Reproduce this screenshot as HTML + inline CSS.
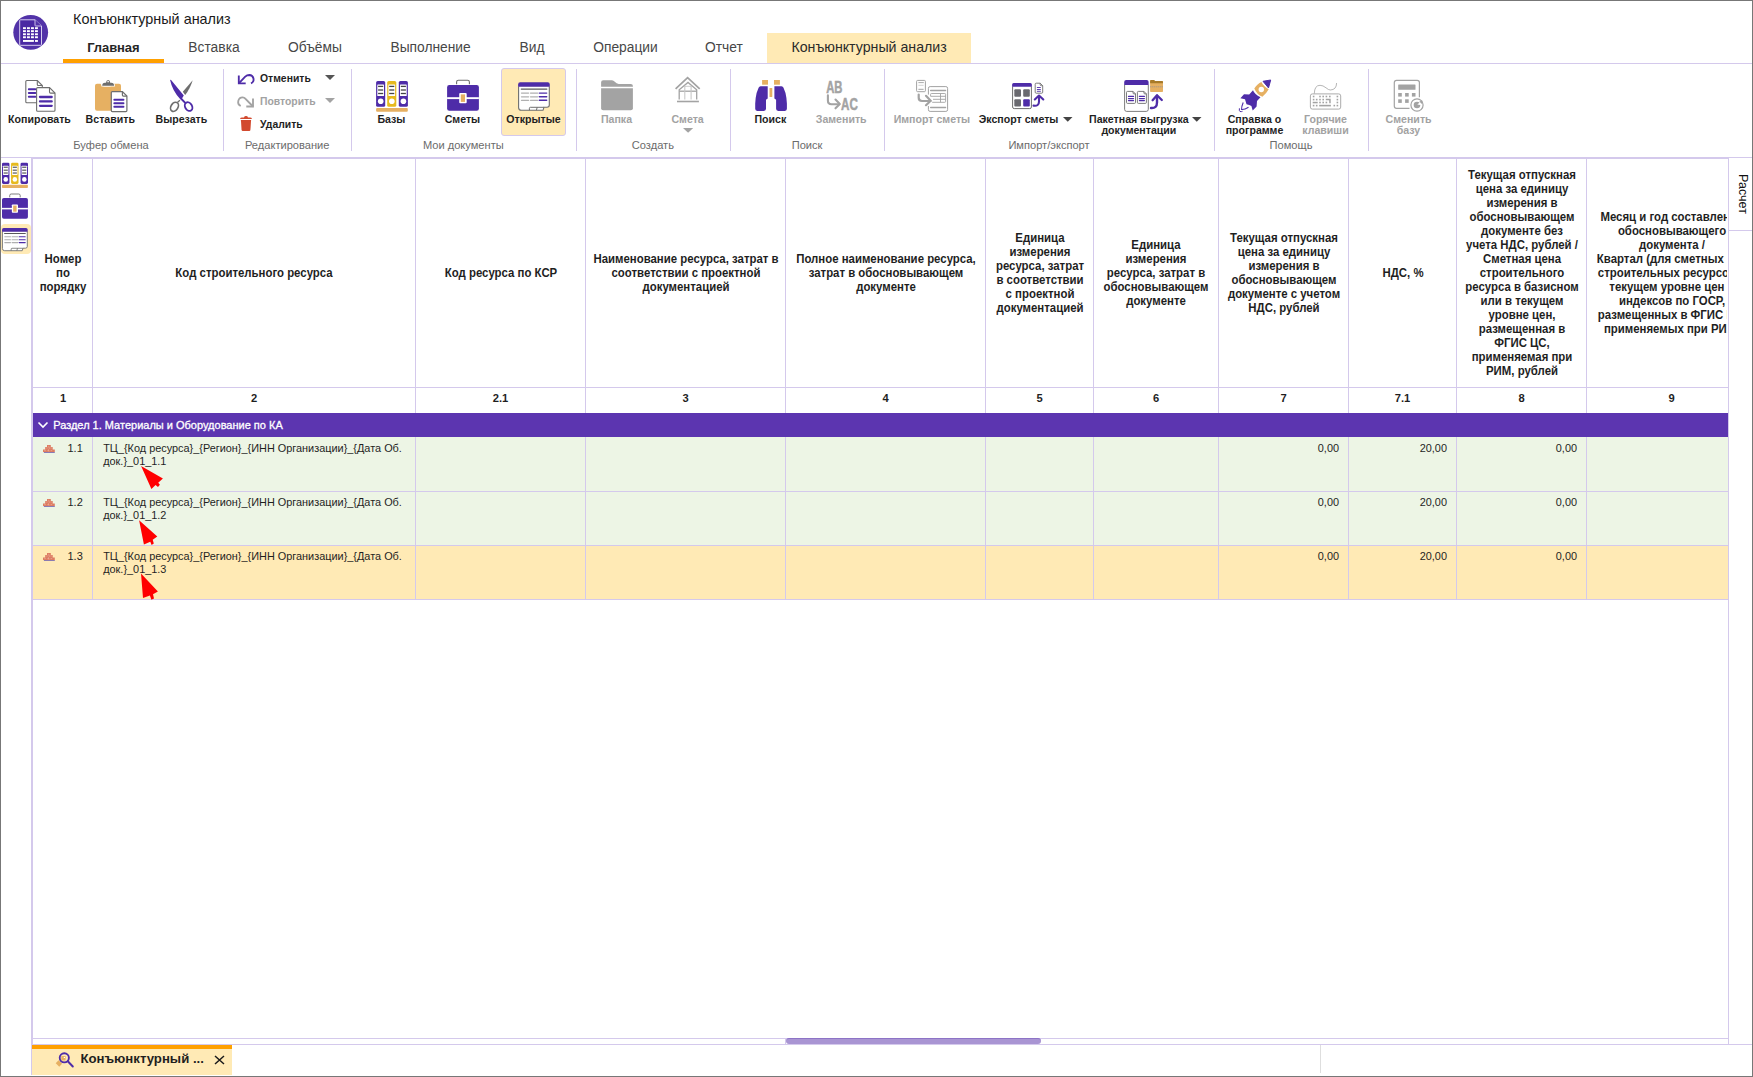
<!DOCTYPE html>
<html><head><meta charset="utf-8"><title>Конъюнктурный анализ</title>
<style>
html,body{margin:0;padding:0;}
body{width:1753px;height:1077px;position:relative;overflow:hidden;background:#fff;font-family:"Liberation Sans", sans-serif;}
.a{position:absolute;}
.t{white-space:nowrap;}
svg.a{overflow:visible;}
</style></head><body>
<div class="a t" style="left:73.00px;top:10.01px;font-size:14.4px;line-height:18.0px;font-weight:400;color:#1a1a1a;text-align:left;">Конъюнктурный анализ</div>
<div class="a" style="left:767px;top:33px;width:204px;height:30px;background:#FFEAB5;"></div>
<div class="a t" style="left:-6.70px;top:39.67px;width:240px;font-size:13px;line-height:16.25px;font-weight:700;color:#262626;text-align:center;letter-spacing:-0.1px;">Главная</div>
<div class="a t" style="left:94.00px;top:38.89px;width:240px;font-size:13.8px;line-height:17.25px;font-weight:400;color:#474747;text-align:center;">Вставка</div>
<div class="a t" style="left:195.00px;top:38.89px;width:240px;font-size:13.8px;line-height:17.25px;font-weight:400;color:#474747;text-align:center;">Объёмы</div>
<div class="a t" style="left:310.60px;top:38.89px;width:240px;font-size:13.8px;line-height:17.25px;font-weight:400;color:#474747;text-align:center;">Выполнение</div>
<div class="a t" style="left:412.10px;top:38.89px;width:240px;font-size:13.8px;line-height:17.25px;font-weight:400;color:#474747;text-align:center;">Вид</div>
<div class="a t" style="left:505.50px;top:38.89px;width:240px;font-size:13.8px;line-height:17.25px;font-weight:400;color:#474747;text-align:center;">Операции</div>
<div class="a t" style="left:603.90px;top:38.89px;width:240px;font-size:13.8px;line-height:17.25px;font-weight:400;color:#474747;text-align:center;">Отчет</div>
<div class="a t" style="left:749.10px;top:38.50px;width:240px;font-size:14.2px;line-height:17.75px;font-weight:400;color:#2a2a2a;text-align:center;">Конъюнктурный анализ</div>
<div class="a" style="left:63px;top:59px;width:101px;height:4px;background:#FFA000;"></div>
<div class="a" style="left:1px;top:63px;width:1751px;height:1px;background:#D4C9EC;"></div>
<div class="a" style="left:1px;top:157px;width:1751px;height:1px;background:#D4C9EC;"></div>
<div class="a" style="left:223px;top:69px;width:1px;height:82px;background:#D4C9EC;"></div>
<div class="a" style="left:351px;top:69px;width:1px;height:82px;background:#D4C9EC;"></div>
<div class="a" style="left:576px;top:69px;width:1px;height:82px;background:#D4C9EC;"></div>
<div class="a" style="left:730px;top:69px;width:1px;height:82px;background:#D4C9EC;"></div>
<div class="a" style="left:884px;top:69px;width:1px;height:82px;background:#D4C9EC;"></div>
<div class="a" style="left:1214px;top:69px;width:1px;height:82px;background:#D4C9EC;"></div>
<div class="a" style="left:1368px;top:69px;width:1px;height:82px;background:#D4C9EC;"></div>
<div class="a" style="left:501px;top:68px;width:65px;height:68px;background:#FFEAB5;box-sizing:border-box;border:1px solid #D4C9EC;border-radius:3px;"></div>
<div class="a t" style="left:-40.50px;top:112.50px;width:160px;font-size:10.6px;line-height:13.25px;font-weight:700;color:#1f1f1f;text-align:center;">Копировать</div>
<div class="a t" style="left:30.30px;top:112.50px;width:160px;font-size:10.6px;line-height:13.25px;font-weight:700;color:#1f1f1f;text-align:center;">Вставить</div>
<div class="a t" style="left:101.40px;top:112.50px;width:160px;font-size:10.6px;line-height:13.25px;font-weight:700;color:#1f1f1f;text-align:center;">Вырезать</div>
<div class="a t" style="left:311.40px;top:112.50px;width:160px;font-size:10.6px;line-height:13.25px;font-weight:700;color:#1f1f1f;text-align:center;">Базы</div>
<div class="a t" style="left:382.40px;top:112.50px;width:160px;font-size:10.6px;line-height:13.25px;font-weight:700;color:#1f1f1f;text-align:center;">Сметы</div>
<div class="a t" style="left:453.50px;top:112.50px;width:160px;font-size:10.6px;line-height:13.25px;font-weight:700;color:#1f1f1f;text-align:center;">Открытые</div>
<div class="a t" style="left:536.50px;top:112.50px;width:160px;font-size:10.6px;line-height:13.25px;font-weight:700;color:#a2a2a2;text-align:center;">Папка</div>
<div class="a t" style="left:607.60px;top:112.50px;width:160px;font-size:10.6px;line-height:13.25px;font-weight:700;color:#a2a2a2;text-align:center;">Смета</div>
<div class="a t" style="left:690.40px;top:112.50px;width:160px;font-size:10.6px;line-height:13.25px;font-weight:700;color:#1f1f1f;text-align:center;">Поиск</div>
<div class="a t" style="left:761.20px;top:112.50px;width:160px;font-size:10.6px;line-height:13.25px;font-weight:700;color:#a2a2a2;text-align:center;">Заменить</div>
<div class="a t" style="left:851.90px;top:112.50px;width:160px;font-size:10.6px;line-height:13.25px;font-weight:700;color:#a2a2a2;text-align:center;">Импорт сметы</div>
<div class="a t" style="left:938.60px;top:112.50px;width:160px;font-size:10.6px;line-height:13.25px;font-weight:700;color:#1f1f1f;text-align:center;">Экспорт сметы</div>
<div class="a t" style="left:1058.90px;top:112.50px;width:160px;font-size:10.6px;line-height:13.25px;font-weight:700;color:#1f1f1f;text-align:center;">Пакетная выгрузка</div>
<div class="a t" style="left:1058.90px;top:124.20px;width:160px;font-size:10.6px;line-height:13.25px;font-weight:700;color:#1f1f1f;text-align:center;">документации</div>
<div class="a t" style="left:1174.50px;top:112.50px;width:160px;font-size:10.6px;line-height:13.25px;font-weight:700;color:#1f1f1f;text-align:center;">Справка о</div>
<div class="a t" style="left:1174.50px;top:124.20px;width:160px;font-size:10.6px;line-height:13.25px;font-weight:700;color:#1f1f1f;text-align:center;">программе</div>
<div class="a t" style="left:1245.50px;top:112.50px;width:160px;font-size:10.6px;line-height:13.25px;font-weight:700;color:#a2a2a2;text-align:center;">Горячие</div>
<div class="a t" style="left:1245.50px;top:124.20px;width:160px;font-size:10.6px;line-height:13.25px;font-weight:700;color:#a2a2a2;text-align:center;">клавиши</div>
<div class="a t" style="left:1328.60px;top:112.50px;width:160px;font-size:10.6px;line-height:13.25px;font-weight:700;color:#a2a2a2;text-align:center;">Сменить</div>
<div class="a t" style="left:1328.40px;top:124.20px;width:160px;font-size:10.6px;line-height:13.25px;font-weight:700;color:#a2a2a2;text-align:center;">базу</div>
<div class="a t" style="left:260.00px;top:71.90px;font-size:10.4px;line-height:13.0px;font-weight:700;color:#1f1f1f;text-align:left;">Отменить</div>
<div class="a t" style="left:260.00px;top:94.90px;font-size:10.4px;line-height:13.0px;font-weight:700;color:#a2a2a2;text-align:left;">Повторить</div>
<div class="a t" style="left:260.00px;top:117.70px;font-size:10.4px;line-height:13.0px;font-weight:700;color:#1f1f1f;text-align:left;">Удалить</div>
<div class="a t" style="left:31.00px;top:139.21px;width:160px;font-size:11.1px;line-height:13.88px;font-weight:400;color:#6b6b6b;text-align:center;">Буфер обмена</div>
<div class="a t" style="left:207.20px;top:139.21px;width:160px;font-size:11.1px;line-height:13.88px;font-weight:400;color:#6b6b6b;text-align:center;">Редактирование</div>
<div class="a t" style="left:383.30px;top:139.21px;width:160px;font-size:11.1px;line-height:13.88px;font-weight:400;color:#6b6b6b;text-align:center;">Мои документы</div>
<div class="a t" style="left:572.90px;top:139.21px;width:160px;font-size:11.1px;line-height:13.88px;font-weight:400;color:#6b6b6b;text-align:center;">Создать</div>
<div class="a t" style="left:727.10px;top:139.21px;width:160px;font-size:11.1px;line-height:13.88px;font-weight:400;color:#6b6b6b;text-align:center;">Поиск</div>
<div class="a t" style="left:969.00px;top:139.21px;width:160px;font-size:11.1px;line-height:13.88px;font-weight:400;color:#6b6b6b;text-align:center;">Импорт/экспорт</div>
<div class="a t" style="left:1211.00px;top:139.21px;width:160px;font-size:11.1px;line-height:13.88px;font-weight:400;color:#6b6b6b;text-align:center;">Помощь</div>
<div class="a" style="left:31px;top:158px;width:2px;height:917px;background:#D4C9EC;"></div>
<div class="a" style="left:1728px;top:158px;width:1px;height:886px;background:#D4C9EC;"></div>
<div class="a" style="left:33px;top:158px;width:1695px;height:1px;background:#D4C9EC;"></div>
<div class="a" style="left:33px;top:387px;width:1695px;height:1px;background:#D4C9EC;"></div>
<div class="a" style="left:33px;top:437px;width:1695px;height:54px;background:#EDF5E5;"></div>
<div class="a" style="left:33px;top:491px;width:1695px;height:1px;background:#D4C9EC;"></div>
<div class="a" style="left:33px;top:492px;width:1695px;height:53px;background:#EDF5E5;"></div>
<div class="a" style="left:33px;top:545px;width:1695px;height:1px;background:#D4C9EC;"></div>
<div class="a" style="left:33px;top:546px;width:1695px;height:53px;background:#FFEAB5;"></div>
<div class="a" style="left:33px;top:599px;width:1695px;height:1px;background:#D4C9EC;"></div>
<div class="a" style="left:33px;top:413px;width:1695px;height:24px;background:#5C35B0;"></div>
<div class="a" style="left:92px;top:159px;width:1px;height:254px;background:#D4C9EC;"></div>
<div class="a" style="left:92px;top:437px;width:1px;height:162px;background:#D4C9EC;"></div>
<div class="a" style="left:415px;top:159px;width:1px;height:254px;background:#D4C9EC;"></div>
<div class="a" style="left:415px;top:437px;width:1px;height:162px;background:#D4C9EC;"></div>
<div class="a" style="left:585px;top:159px;width:1px;height:254px;background:#D4C9EC;"></div>
<div class="a" style="left:585px;top:437px;width:1px;height:162px;background:#D4C9EC;"></div>
<div class="a" style="left:785px;top:159px;width:1px;height:254px;background:#D4C9EC;"></div>
<div class="a" style="left:785px;top:437px;width:1px;height:162px;background:#D4C9EC;"></div>
<div class="a" style="left:985px;top:159px;width:1px;height:254px;background:#D4C9EC;"></div>
<div class="a" style="left:985px;top:437px;width:1px;height:162px;background:#D4C9EC;"></div>
<div class="a" style="left:1093px;top:159px;width:1px;height:254px;background:#D4C9EC;"></div>
<div class="a" style="left:1093px;top:437px;width:1px;height:162px;background:#D4C9EC;"></div>
<div class="a" style="left:1218px;top:159px;width:1px;height:254px;background:#D4C9EC;"></div>
<div class="a" style="left:1218px;top:437px;width:1px;height:162px;background:#D4C9EC;"></div>
<div class="a" style="left:1348px;top:159px;width:1px;height:254px;background:#D4C9EC;"></div>
<div class="a" style="left:1348px;top:437px;width:1px;height:162px;background:#D4C9EC;"></div>
<div class="a" style="left:1456px;top:159px;width:1px;height:254px;background:#D4C9EC;"></div>
<div class="a" style="left:1456px;top:437px;width:1px;height:162px;background:#D4C9EC;"></div>
<div class="a" style="left:1586px;top:159px;width:1px;height:254px;background:#D4C9EC;"></div>
<div class="a" style="left:1586px;top:437px;width:1px;height:162px;background:#D4C9EC;"></div>
<div class="a" style="left:33px;top:159px;width:1694px;height:440px;overflow:hidden">
<div class="a t" style="left:-100.00px;top:92.64px;width:260px;font-size:12px;line-height:15.0px;font-weight:700;color:#1f1f1f;text-align:center;transform:scaleX(0.95);">Номер</div>
<div class="a t" style="left:-100.00px;top:106.64px;width:260px;font-size:12px;line-height:15.0px;font-weight:700;color:#1f1f1f;text-align:center;transform:scaleX(0.95);">по</div>
<div class="a t" style="left:-100.00px;top:120.64px;width:260px;font-size:12px;line-height:15.0px;font-weight:700;color:#1f1f1f;text-align:center;transform:scaleX(0.95);">порядку</div>
<div class="a t" style="left:-20.00px;top:231.82px;width:100px;font-size:11.2px;line-height:14.0px;font-weight:700;color:#1f1f1f;text-align:center;">1</div>
<div class="a t" style="left:91.00px;top:106.64px;width:260px;font-size:12px;line-height:15.0px;font-weight:700;color:#1f1f1f;text-align:center;transform:scaleX(0.95);">Код строительного ресурса</div>
<div class="a t" style="left:171.00px;top:231.82px;width:100px;font-size:11.2px;line-height:14.0px;font-weight:700;color:#1f1f1f;text-align:center;">2</div>
<div class="a t" style="left:337.50px;top:106.64px;width:260px;font-size:12px;line-height:15.0px;font-weight:700;color:#1f1f1f;text-align:center;transform:scaleX(0.95);">Код ресурса по КСР</div>
<div class="a t" style="left:417.50px;top:231.82px;width:100px;font-size:11.2px;line-height:14.0px;font-weight:700;color:#1f1f1f;text-align:center;">2.1</div>
<div class="a t" style="left:522.50px;top:92.64px;width:260px;font-size:12px;line-height:15.0px;font-weight:700;color:#1f1f1f;text-align:center;transform:scaleX(0.95);">Наименование ресурса, затрат в</div>
<div class="a t" style="left:522.50px;top:106.64px;width:260px;font-size:12px;line-height:15.0px;font-weight:700;color:#1f1f1f;text-align:center;transform:scaleX(0.95);">соответствии с проектной</div>
<div class="a t" style="left:522.50px;top:120.64px;width:260px;font-size:12px;line-height:15.0px;font-weight:700;color:#1f1f1f;text-align:center;transform:scaleX(0.95);">документацией</div>
<div class="a t" style="left:602.50px;top:231.82px;width:100px;font-size:11.2px;line-height:14.0px;font-weight:700;color:#1f1f1f;text-align:center;">3</div>
<div class="a t" style="left:722.50px;top:92.64px;width:260px;font-size:12px;line-height:15.0px;font-weight:700;color:#1f1f1f;text-align:center;transform:scaleX(0.95);">Полное наименование ресурса,</div>
<div class="a t" style="left:722.50px;top:106.64px;width:260px;font-size:12px;line-height:15.0px;font-weight:700;color:#1f1f1f;text-align:center;transform:scaleX(0.95);">затрат в обосновывающем</div>
<div class="a t" style="left:722.50px;top:120.64px;width:260px;font-size:12px;line-height:15.0px;font-weight:700;color:#1f1f1f;text-align:center;transform:scaleX(0.95);">документе</div>
<div class="a t" style="left:802.50px;top:231.82px;width:100px;font-size:11.2px;line-height:14.0px;font-weight:700;color:#1f1f1f;text-align:center;">4</div>
<div class="a t" style="left:876.50px;top:71.64px;width:260px;font-size:12px;line-height:15.0px;font-weight:700;color:#1f1f1f;text-align:center;transform:scaleX(0.95);">Единица</div>
<div class="a t" style="left:876.50px;top:85.64px;width:260px;font-size:12px;line-height:15.0px;font-weight:700;color:#1f1f1f;text-align:center;transform:scaleX(0.95);">измерения</div>
<div class="a t" style="left:876.50px;top:99.64px;width:260px;font-size:12px;line-height:15.0px;font-weight:700;color:#1f1f1f;text-align:center;transform:scaleX(0.95);">ресурса, затрат</div>
<div class="a t" style="left:876.50px;top:113.64px;width:260px;font-size:12px;line-height:15.0px;font-weight:700;color:#1f1f1f;text-align:center;transform:scaleX(0.95);">в соответствии</div>
<div class="a t" style="left:876.50px;top:127.64px;width:260px;font-size:12px;line-height:15.0px;font-weight:700;color:#1f1f1f;text-align:center;transform:scaleX(0.95);">с проектной</div>
<div class="a t" style="left:876.50px;top:141.64px;width:260px;font-size:12px;line-height:15.0px;font-weight:700;color:#1f1f1f;text-align:center;transform:scaleX(0.95);">документацией</div>
<div class="a t" style="left:956.50px;top:231.82px;width:100px;font-size:11.2px;line-height:14.0px;font-weight:700;color:#1f1f1f;text-align:center;">5</div>
<div class="a t" style="left:993.00px;top:78.64px;width:260px;font-size:12px;line-height:15.0px;font-weight:700;color:#1f1f1f;text-align:center;transform:scaleX(0.95);">Единица</div>
<div class="a t" style="left:993.00px;top:92.64px;width:260px;font-size:12px;line-height:15.0px;font-weight:700;color:#1f1f1f;text-align:center;transform:scaleX(0.95);">измерения</div>
<div class="a t" style="left:993.00px;top:106.64px;width:260px;font-size:12px;line-height:15.0px;font-weight:700;color:#1f1f1f;text-align:center;transform:scaleX(0.95);">ресурса, затрат в</div>
<div class="a t" style="left:993.00px;top:120.64px;width:260px;font-size:12px;line-height:15.0px;font-weight:700;color:#1f1f1f;text-align:center;transform:scaleX(0.95);">обосновывающем</div>
<div class="a t" style="left:993.00px;top:134.64px;width:260px;font-size:12px;line-height:15.0px;font-weight:700;color:#1f1f1f;text-align:center;transform:scaleX(0.95);">документе</div>
<div class="a t" style="left:1073.00px;top:231.82px;width:100px;font-size:11.2px;line-height:14.0px;font-weight:700;color:#1f1f1f;text-align:center;">6</div>
<div class="a t" style="left:1120.50px;top:71.64px;width:260px;font-size:12px;line-height:15.0px;font-weight:700;color:#1f1f1f;text-align:center;transform:scaleX(0.95);">Текущая отпускная</div>
<div class="a t" style="left:1120.50px;top:85.64px;width:260px;font-size:12px;line-height:15.0px;font-weight:700;color:#1f1f1f;text-align:center;transform:scaleX(0.95);">цена за единицу</div>
<div class="a t" style="left:1120.50px;top:99.64px;width:260px;font-size:12px;line-height:15.0px;font-weight:700;color:#1f1f1f;text-align:center;transform:scaleX(0.95);">измерения в</div>
<div class="a t" style="left:1120.50px;top:113.64px;width:260px;font-size:12px;line-height:15.0px;font-weight:700;color:#1f1f1f;text-align:center;transform:scaleX(0.95);">обосновывающем</div>
<div class="a t" style="left:1120.50px;top:127.64px;width:260px;font-size:12px;line-height:15.0px;font-weight:700;color:#1f1f1f;text-align:center;transform:scaleX(0.95);">документе с учетом</div>
<div class="a t" style="left:1120.50px;top:141.64px;width:260px;font-size:12px;line-height:15.0px;font-weight:700;color:#1f1f1f;text-align:center;transform:scaleX(0.95);">НДС, рублей</div>
<div class="a t" style="left:1200.50px;top:231.82px;width:100px;font-size:11.2px;line-height:14.0px;font-weight:700;color:#1f1f1f;text-align:center;">7</div>
<div class="a t" style="left:1239.50px;top:106.64px;width:260px;font-size:12px;line-height:15.0px;font-weight:700;color:#1f1f1f;text-align:center;transform:scaleX(0.95);">НДС, %</div>
<div class="a t" style="left:1319.50px;top:231.82px;width:100px;font-size:11.2px;line-height:14.0px;font-weight:700;color:#1f1f1f;text-align:center;">7.1</div>
<div class="a t" style="left:1358.50px;top:8.64px;width:260px;font-size:12px;line-height:15.0px;font-weight:700;color:#1f1f1f;text-align:center;transform:scaleX(0.95);">Текущая отпускная</div>
<div class="a t" style="left:1358.50px;top:22.64px;width:260px;font-size:12px;line-height:15.0px;font-weight:700;color:#1f1f1f;text-align:center;transform:scaleX(0.95);">цена за единицу</div>
<div class="a t" style="left:1358.50px;top:36.64px;width:260px;font-size:12px;line-height:15.0px;font-weight:700;color:#1f1f1f;text-align:center;transform:scaleX(0.95);">измерения в</div>
<div class="a t" style="left:1358.50px;top:50.64px;width:260px;font-size:12px;line-height:15.0px;font-weight:700;color:#1f1f1f;text-align:center;transform:scaleX(0.95);">обосновывающем</div>
<div class="a t" style="left:1358.50px;top:64.64px;width:260px;font-size:12px;line-height:15.0px;font-weight:700;color:#1f1f1f;text-align:center;transform:scaleX(0.95);">документе без</div>
<div class="a t" style="left:1358.50px;top:78.64px;width:260px;font-size:12px;line-height:15.0px;font-weight:700;color:#1f1f1f;text-align:center;transform:scaleX(0.95);">учета НДС, рублей /</div>
<div class="a t" style="left:1358.50px;top:92.64px;width:260px;font-size:12px;line-height:15.0px;font-weight:700;color:#1f1f1f;text-align:center;transform:scaleX(0.95);">Сметная цена</div>
<div class="a t" style="left:1358.50px;top:106.64px;width:260px;font-size:12px;line-height:15.0px;font-weight:700;color:#1f1f1f;text-align:center;transform:scaleX(0.95);">строительного</div>
<div class="a t" style="left:1358.50px;top:120.64px;width:260px;font-size:12px;line-height:15.0px;font-weight:700;color:#1f1f1f;text-align:center;transform:scaleX(0.95);">ресурса в базисном</div>
<div class="a t" style="left:1358.50px;top:134.64px;width:260px;font-size:12px;line-height:15.0px;font-weight:700;color:#1f1f1f;text-align:center;transform:scaleX(0.95);">или в текущем</div>
<div class="a t" style="left:1358.50px;top:148.64px;width:260px;font-size:12px;line-height:15.0px;font-weight:700;color:#1f1f1f;text-align:center;transform:scaleX(0.95);">уровне цен,</div>
<div class="a t" style="left:1358.50px;top:162.64px;width:260px;font-size:12px;line-height:15.0px;font-weight:700;color:#1f1f1f;text-align:center;transform:scaleX(0.95);">размещенная в</div>
<div class="a t" style="left:1358.50px;top:176.64px;width:260px;font-size:12px;line-height:15.0px;font-weight:700;color:#1f1f1f;text-align:center;transform:scaleX(0.95);">ФГИС ЦС,</div>
<div class="a t" style="left:1358.50px;top:190.64px;width:260px;font-size:12px;line-height:15.0px;font-weight:700;color:#1f1f1f;text-align:center;transform:scaleX(0.95);">применяемая при</div>
<div class="a t" style="left:1358.50px;top:204.64px;width:260px;font-size:12px;line-height:15.0px;font-weight:700;color:#1f1f1f;text-align:center;transform:scaleX(0.95);">РИМ, рублей</div>
<div class="a t" style="left:1438.50px;top:231.82px;width:100px;font-size:11.2px;line-height:14.0px;font-weight:700;color:#1f1f1f;text-align:center;">8</div>
<div class="a t" style="left:1508.50px;top:50.64px;width:260px;font-size:12px;line-height:15.0px;font-weight:700;color:#1f1f1f;text-align:center;transform:scaleX(0.95);">Месяц и год составления</div>
<div class="a t" style="left:1508.50px;top:64.64px;width:260px;font-size:12px;line-height:15.0px;font-weight:700;color:#1f1f1f;text-align:center;transform:scaleX(0.95);">обосновывающего</div>
<div class="a t" style="left:1508.50px;top:78.64px;width:260px;font-size:12px;line-height:15.0px;font-weight:700;color:#1f1f1f;text-align:center;transform:scaleX(0.95);">документа /</div>
<div class="a t" style="left:1508.50px;top:92.64px;width:260px;font-size:12px;line-height:15.0px;font-weight:700;color:#1f1f1f;text-align:center;transform:scaleX(0.95);">Квартал (для сметных цен</div>
<div class="a t" style="left:1508.50px;top:106.64px;width:260px;font-size:12px;line-height:15.0px;font-weight:700;color:#1f1f1f;text-align:center;transform:scaleX(0.95);">строительных ресурсов в</div>
<div class="a t" style="left:1508.50px;top:120.64px;width:260px;font-size:12px;line-height:15.0px;font-weight:700;color:#1f1f1f;text-align:center;transform:scaleX(0.95);">текущем уровне цен и</div>
<div class="a t" style="left:1508.50px;top:134.64px;width:260px;font-size:12px;line-height:15.0px;font-weight:700;color:#1f1f1f;text-align:center;transform:scaleX(0.95);">индексов по ГОСР,</div>
<div class="a t" style="left:1508.50px;top:148.64px;width:260px;font-size:12px;line-height:15.0px;font-weight:700;color:#1f1f1f;text-align:center;transform:scaleX(0.95);">размещенных в ФГИС ЦС,</div>
<div class="a t" style="left:1508.50px;top:162.64px;width:260px;font-size:12px;line-height:15.0px;font-weight:700;color:#1f1f1f;text-align:center;transform:scaleX(0.95);">применяемых при РИМ)</div>
<div class="a t" style="left:1588.50px;top:231.82px;width:100px;font-size:11.2px;line-height:14.0px;font-weight:700;color:#1f1f1f;text-align:center;">9</div>
</div>
<svg class="a" style="left:37px;top:421px" width="12" height="8" viewBox="0 0 12 8"><path d="M1.5 1.5 L6 6 L10.5 1.5" fill="none" stroke="#fff" stroke-width="1.6"/></svg>
<div class="a t" style="left:53.20px;top:419.21px;font-size:11px;line-height:13.75px;font-weight:400;color:#fff;text-align:left;-webkit-text-stroke:0.3px #fff;">Раздел 1. Материалы и Оборудование по КА</div>
<div class="a t" style="left:42.80px;top:442.21px;width:40px;font-size:11px;line-height:13.75px;font-weight:400;color:#1f1f1f;text-align:right;">1.1</div>
<div class="a t" style="left:103.20px;top:441.61px;font-size:10.9px;line-height:13.62px;font-weight:400;color:#1f1f1f;text-align:left;">ТЦ_{Код ресурса}_{Регион}_{ИНН Организации}_{Дата Об.</div>
<div class="a t" style="left:103.20px;top:454.81px;font-size:10.9px;line-height:13.62px;font-weight:400;color:#1f1f1f;text-align:left;">док.}_01_1.1</div>
<div class="a t" style="left:1259.00px;top:441.61px;width:80px;font-size:10.9px;line-height:13.62px;font-weight:400;color:#1f1f1f;text-align:right;">0,00</div>
<div class="a t" style="left:1367.00px;top:441.61px;width:80px;font-size:10.9px;line-height:13.62px;font-weight:400;color:#1f1f1f;text-align:right;">20,00</div>
<div class="a t" style="left:1497.00px;top:441.61px;width:80px;font-size:10.9px;line-height:13.62px;font-weight:400;color:#1f1f1f;text-align:right;">0,00</div>
<div class="a t" style="left:42.80px;top:496.21px;width:40px;font-size:11px;line-height:13.75px;font-weight:400;color:#1f1f1f;text-align:right;">1.2</div>
<div class="a t" style="left:103.20px;top:495.61px;font-size:10.9px;line-height:13.62px;font-weight:400;color:#1f1f1f;text-align:left;">ТЦ_{Код ресурса}_{Регион}_{ИНН Организации}_{Дата Об.</div>
<div class="a t" style="left:103.20px;top:508.81px;font-size:10.9px;line-height:13.62px;font-weight:400;color:#1f1f1f;text-align:left;">док.}_01_1.2</div>
<div class="a t" style="left:1259.00px;top:495.61px;width:80px;font-size:10.9px;line-height:13.62px;font-weight:400;color:#1f1f1f;text-align:right;">0,00</div>
<div class="a t" style="left:1367.00px;top:495.61px;width:80px;font-size:10.9px;line-height:13.62px;font-weight:400;color:#1f1f1f;text-align:right;">20,00</div>
<div class="a t" style="left:1497.00px;top:495.61px;width:80px;font-size:10.9px;line-height:13.62px;font-weight:400;color:#1f1f1f;text-align:right;">0,00</div>
<div class="a t" style="left:42.80px;top:550.21px;width:40px;font-size:11px;line-height:13.75px;font-weight:400;color:#1f1f1f;text-align:right;">1.3</div>
<div class="a t" style="left:103.20px;top:549.61px;font-size:10.9px;line-height:13.62px;font-weight:400;color:#1f1f1f;text-align:left;">ТЦ_{Код ресурса}_{Регион}_{ИНН Организации}_{Дата Об.</div>
<div class="a t" style="left:103.20px;top:562.81px;font-size:10.9px;line-height:13.62px;font-weight:400;color:#1f1f1f;text-align:left;">док.}_01_1.3</div>
<div class="a t" style="left:1259.00px;top:549.61px;width:80px;font-size:10.9px;line-height:13.62px;font-weight:400;color:#1f1f1f;text-align:right;">0,00</div>
<div class="a t" style="left:1367.00px;top:549.61px;width:80px;font-size:10.9px;line-height:13.62px;font-weight:400;color:#1f1f1f;text-align:right;">20,00</div>
<div class="a t" style="left:1497.00px;top:549.61px;width:80px;font-size:10.9px;line-height:13.62px;font-weight:400;color:#1f1f1f;text-align:right;">0,00</div>
<div class="a" style="left:1729px;top:230px;width:23px;height:1px;background:#D4C9EC;"></div>
<div class="a t" style="left:1743.1px;top:194.3px;width:60px;height:14px;margin-left:-30px;margin-top:-7px;font-size:12.5px;line-height:14px;text-align:center;color:#111;transform:rotate(90deg)">Расчет</div>
<div class="a" style="left:33px;top:1038px;width:1695px;height:1px;background:#D4C9EC;"></div>
<div class="a" style="left:33px;top:1044px;width:1719px;height:1px;background:#D4C9EC;"></div>
<div class="a" style="left:785px;top:1038px;width:1px;height:6px;background:#D4C9EC;"></div>
<div class="a" style="left:786px;top:1038px;width:255px;height:6px;background:#A995D3;box-sizing:border-box;border-top:1px solid #8D73C6;border-radius:3px;"></div>
<div class="a" style="left:32px;top:1045px;width:200px;height:4px;background:#FFA000;"></div>
<div class="a" style="left:32px;top:1049px;width:200px;height:26px;background:#FFEAB5;"></div>
<div class="a t" style="left:80.40px;top:1051.48px;font-size:13.2px;line-height:16.5px;font-weight:700;color:#1f1f1f;text-align:left;">Конъюнктурный ...</div>
<svg class="a" style="left:214px;top:1055px" width="11" height="10" viewBox="0 0 11 10"><path d="M1 1 L10 9 M10 1 L1 9" stroke="#1a1a1a" stroke-width="1.5"/></svg>
<div class="a" style="left:1320px;top:1045px;width:1px;height:28px;background:#dedede;"></div>
<svg class="a" style="left:13px;top:15px" width="36" height="36" viewBox="0 0 36 36"><circle cx="17.7" cy="17.3" r="17.4" fill="#5233A8"/><path d="M7.5 4.8 H22 L28.5 11 V29.5 a0.8 0.8 0 0 1 -0.8 0.8 H7.5 a0.8 0.8 0 0 1 -0.8 -0.8 V5.6 a0.8 0.8 0 0 1 0.8 -0.8Z" fill="#4A29A3" stroke="#D8CFF0" stroke-width="1"/><path d="M22 4.8 V10.3 a0.7 0.7 0 0 0 0.7 0.7 H28.5" fill="#5233A8" stroke="#D8CFF0" stroke-width="0.9"/><rect x="10" y="12.2" width="2.9" height="1.9" fill="#fff"/><rect x="14" y="12.2" width="2.9" height="1.9" fill="#fff"/><rect x="18" y="12.2" width="2.9" height="1.9" fill="#fff"/><rect x="22" y="12.2" width="2.9" height="1.9" fill="#fff"/><rect x="10" y="15.2" width="2.9" height="1.9" fill="#fff"/><rect x="14" y="15.2" width="2.9" height="1.9" fill="#fff"/><rect x="18" y="15.2" width="2.9" height="1.9" fill="#fff"/><rect x="22" y="15.2" width="2.9" height="1.9" fill="#fff"/><rect x="10" y="18.3" width="2.9" height="1.9" fill="#fff"/><rect x="14" y="18.3" width="2.9" height="1.9" fill="#fff"/><rect x="18" y="18.3" width="2.9" height="1.9" fill="#fff"/><rect x="22" y="18.3" width="2.9" height="1.9" fill="#fff"/><rect x="10" y="21.3" width="2.9" height="1.9" fill="#fff"/><rect x="14" y="21.3" width="2.9" height="1.9" fill="#fff"/><rect x="18" y="21.3" width="2.9" height="1.9" fill="#fff"/><rect x="22" y="21.3" width="2.9" height="1.9" fill="#fff"/><rect x="10" y="25" width="10.9" height="1.9" fill="#fff"/><rect x="22" y="25" width="2.9" height="1.9" fill="#fff"/></svg>
<svg class="a" style="left:20px;top:76px" width="40" height="40" viewBox="0 0 40 40"><path d="M6.8 4.5 H17.3 L22.3 9.5 V25.8 a1 1 0 0 1 -1 1 H6.8 a1 1 0 0 1 -1 -1 V5.5 a1 1 0 0 1 1 -1Z" fill="#fff" stroke="#6e6e6e" stroke-width="1.1"/><path d="M17.3 4.5 V8.5 a1 1 0 0 0 1 1 H22.3" fill="none" stroke="#6e6e6e" stroke-width="1.1"/><line x1="8.8" y1="13.2" x2="15.4" y2="13.2" stroke="#4E2CA8" stroke-width="1.9" stroke-linecap="round"/><line x1="8.8" y1="17" x2="15.4" y2="17" stroke="#4E2CA8" stroke-width="1.9" stroke-linecap="round"/><line x1="8.8" y1="20.8" x2="15.4" y2="20.8" stroke="#4E2CA8" stroke-width="1.9" stroke-linecap="round"/><path d="M17.6 11.6 H29.5 L35.0 17.1 V34.2 a1 1 0 0 1 -1 1 H17.6 a1 1 0 0 1 -1 -1 V12.6 a1 1 0 0 1 1 -1Z" fill="#fff" stroke="#6e6e6e" stroke-width="1.1"/><path d="M29.5 11.6 V16.1 a1 1 0 0 0 1 1 H35.0" fill="none" stroke="#6e6e6e" stroke-width="1.1"/><line x1="20" y1="21" x2="31.7" y2="21" stroke="#4E2CA8" stroke-width="2.3" stroke-linecap="round"/><line x1="20" y1="25.4" x2="31.7" y2="25.4" stroke="#4E2CA8" stroke-width="2.3" stroke-linecap="round"/><line x1="20" y1="29.8" x2="31.7" y2="29.8" stroke="#4E2CA8" stroke-width="2.3" stroke-linecap="round"/></svg>
<svg class="a" style="left:94px;top:76px" width="40" height="40" viewBox="0 0 40 40"><path d="M1 9.8 a2 2 0 0 1 2 -2 H6.5 a4 4 0 0 0 3.8 2.6 H15.7 a4 4 0 0 0 3.8 -2.6 H25 a2 2 0 0 1 2 2 V32.8 a2 2 0 0 1 -2 2 H3 a2 2 0 0 1 -2 -2Z" fill="#E6B062"/><path d="M8.2 9.8 Q8.2 6.8 11 6.8 H12 Q12.3 4 14.15 4 Q16 4 16.3 6.8 H17.3 Q20.1 6.8 20.1 9.8Z" fill="#fff" stroke="#fff" stroke-width="1.6"/><path d="M8.2 9.8 Q8.2 6.8 11 6.8 H12 Q12.3 4 14.15 4 Q16 4 16.3 6.8 H17.3 Q20.1 6.8 20.1 9.8Z" fill="#6e6e6e"/><ellipse cx="14.15" cy="5.7" rx="1" ry="0.65" fill="#fff"/><path d="M18.3 15.6 H28.4 L32.9 20.1 V34.6 a1 1 0 0 1 -1 1 H18.3 a1 1 0 0 1 -1 -1 V16.6 a1 1 0 0 1 1 -1Z" fill="#fff" stroke="#6e6e6e" stroke-width="1.2"/><path d="M28.4 15.6 V19.1 a1 1 0 0 0 1 1 H32.9" fill="none" stroke="#6e6e6e" stroke-width="1.2"/><line x1="20.3" y1="23.8" x2="29.5" y2="23.8" stroke="#4E2CA8" stroke-width="1.9" stroke-linecap="round"/><line x1="20.3" y1="27.3" x2="29.5" y2="27.3" stroke="#4E2CA8" stroke-width="1.9" stroke-linecap="round"/><line x1="20.3" y1="30.7" x2="29.5" y2="30.7" stroke="#4E2CA8" stroke-width="1.9" stroke-linecap="round"/></svg>
<svg class="a" style="left:160px;top:76px" width="40" height="40" viewBox="0 0 40 40"><path d="M10.1 3.9 Q11 3.6 11.5 4.4 L23.8 19.4 L22.1 22.3 L26.2 26.6 L24.5 27.6 L20.3 23.2 Q12.3 14.5 10.1 3.9Z" fill="#4E2CA8"/><ellipse cx="28.6" cy="30.6" rx="3.4" ry="4.6" transform="rotate(-32 28.6 30.6)" fill="none" stroke="#4E2CA8" stroke-width="1.9"/><path d="M32.7 4.3 L22.8 15.7 L25.2 19 Q30 13 32.7 4.3Z" fill="#6e6e6e"/><ellipse cx="14.5" cy="30.8" rx="3.5" ry="4.9" transform="rotate(32 14.5 30.8)" fill="none" stroke="#6e6e6e" stroke-width="1.7"/><line x1="17.6" y1="26.3" x2="19.9" y2="24.3" stroke="#6e6e6e" stroke-width="1.4"/></svg>
<svg class="a" style="left:234px;top:70px" width="24" height="40" viewBox="0 0 24 40"><path d="M4.8 5.4 V13.3 H11.7" fill="none" stroke="#4E2CA8" stroke-width="1.85"/><path d="M4.8 13.3 L11.2 6.6 Q13 5 15.3 5 A4.4 4.4 0 0 1 17 13.4" fill="none" stroke="#4E2CA8" stroke-width="1.85"/><path d="M19 28.5 V36.5 H12.3" fill="none" stroke="#a3a3a3" stroke-width="1.85"/><path d="M19 36.5 L11.3 28.6 Q10.2 27.3 8.7 27.3 A4.6 4.6 0 0 0 6.7 36" fill="none" stroke="#a3a3a3" stroke-width="1.85"/></svg>
<svg class="a" style="left:240px;top:116px" width="12" height="15" viewBox="0 0 12 15"><path d="M0.2 2.4 Q0.2 1.4 2 1.4 H4 Q4.3 0 6 0 Q7.7 0 8 1.4 H10 Q11.8 1.4 11.8 2.4 V3 H0.2Z" fill="#D24A2F"/><path d="M0.9 4.1 H11.1 L10.4 14 Q10.3 15 9.3 15 H2.7 Q1.7 15 1.6 14Z" fill="#D24A2F"/></svg>
<svg class="a" style="left:325px;top:74.9px" width="10" height="5" viewBox="0 0 10 5"><path d="M0 0 H10 L5 5Z" fill="#555"/></svg>
<svg class="a" style="left:325px;top:97.6px" width="10" height="5" viewBox="0 0 10 5"><path d="M0 0 H10 L5 5Z" fill="#a3a3a3"/></svg>
<svg class="a" style="left:372px;top:76px" width="40" height="40" viewBox="0 0 40 40"><rect x="4.1" y="5" width="9.1" height="25.8" rx="1.6" fill="#4E2CA8"/><rect x="5.3" y="8.5" width="6.7" height="11.5" rx="0.6" fill="#fff"/><line x1="6.1" y1="10.4" x2="11.2" y2="10.4" stroke="#444" stroke-width="1.3"/><line x1="6.1" y1="14" x2="11.2" y2="14" stroke="#444" stroke-width="1.3"/><line x1="6.1" y1="17.5" x2="11.2" y2="17.5" stroke="#444" stroke-width="1.3"/><circle cx="8.7" cy="25.3" r="2.8" fill="#fff"/><rect x="15.2" y="5" width="9.1" height="25.8" rx="1.6" fill="#E6BA1E"/><rect x="16.4" y="8.5" width="6.7" height="11.5" rx="0.6" fill="#fff"/><line x1="17.2" y1="10.4" x2="22.299999999999997" y2="10.4" stroke="#444" stroke-width="1.3"/><line x1="17.2" y1="14" x2="22.299999999999997" y2="14" stroke="#444" stroke-width="1.3"/><line x1="17.2" y1="17.5" x2="22.299999999999997" y2="17.5" stroke="#444" stroke-width="1.3"/><circle cx="19.799999999999997" cy="25.3" r="2.8" fill="#fff"/><rect x="26.8" y="5" width="9.1" height="25.8" rx="1.6" fill="#4E2CA8"/><rect x="28.0" y="8.5" width="6.7" height="11.5" rx="0.6" fill="#fff"/><line x1="28.8" y1="10.4" x2="33.9" y2="10.4" stroke="#444" stroke-width="1.3"/><line x1="28.8" y1="14" x2="33.9" y2="14" stroke="#444" stroke-width="1.3"/><line x1="28.8" y1="17.5" x2="33.9" y2="17.5" stroke="#444" stroke-width="1.3"/><circle cx="31.4" cy="25.3" r="2.8" fill="#fff"/><rect x="4.1" y="31.9" width="31.7" height="3.9" rx="1" fill="#E6B062"/></svg>
<svg class="a" style="left:443px;top:76px" width="40" height="40" viewBox="0 0 40 40"><path d="M13.6 8.3 V6 Q13.6 4.2 15.4 4.2 H24.6 Q26.4 4.2 26.4 6 V8.3" fill="none" stroke="#6e6e6e" stroke-width="1.1"/><rect x="4.1" y="9.1" width="31.8" height="25.6" rx="2.2" fill="#4E2CA8"/><rect x="4.1" y="21.2" width="31.8" height="1.9" fill="#fff"/><rect x="16.2" y="17" width="7.5" height="10.3" rx="1" fill="#fff"/><rect x="17.8" y="18.4" width="4.2" height="7.5" fill="#E6B062"/></svg>
<svg class="a" style="left:514px;top:76px" width="40" height="40" viewBox="0 0 40 40"><path d="M4.6 10.5 V31.5 Q4.6 34.3 7.4 34.3 H29 L30 31.2 H33 Q35.3 31.2 35.3 29 V10.5" fill="#fff" stroke="#6e6e6e" stroke-width="1.1"/><path d="M4.1 10.8 V8.4 Q4.1 6.3 6.2 6.3 H33.7 Q35.8 6.3 35.8 8.4 V10.8Z" fill="#4E2CA8"/><path d="M15.4 34.3 V32.3 Q15.4 31.3 16.4 31.3 H30" fill="none" stroke="#6e6e6e" stroke-width="1"/><path d="M22.4 34.3 L23.2 31.3" stroke="#6e6e6e" stroke-width="1"/><line x1="7.3" y1="13.1" x2="32.8" y2="13.1" stroke="#5a5a5a" stroke-width="1.4" stroke-linecap="round"/><line x1="7.5" y1="17.1" x2="14.6" y2="17.1" stroke="#b0b0b0" stroke-width="1.3" stroke-linecap="round"/><line x1="16.5" y1="17.1" x2="23.6" y2="17.1" stroke="#b0b0b0" stroke-width="1.3" stroke-linecap="round"/><line x1="25.3" y1="17.1" x2="32.7" y2="17.1" stroke="#4E2CA8" stroke-width="1.4" stroke-linecap="round"/><line x1="7.5" y1="20.8" x2="14.6" y2="20.8" stroke="#b0b0b0" stroke-width="1.3" stroke-linecap="round"/><line x1="16.5" y1="20.8" x2="23.6" y2="20.8" stroke="#b0b0b0" stroke-width="1.3" stroke-linecap="round"/><line x1="25.3" y1="20.8" x2="32.7" y2="20.8" stroke="#4E2CA8" stroke-width="1.4" stroke-linecap="round"/><line x1="7.5" y1="24.3" x2="14.6" y2="24.3" stroke="#b0b0b0" stroke-width="1.3" stroke-linecap="round"/><line x1="16.5" y1="24.3" x2="23.6" y2="24.3" stroke="#b0b0b0" stroke-width="1.3" stroke-linecap="round"/><line x1="25.3" y1="24.3" x2="32.7" y2="24.3" stroke="#4E2CA8" stroke-width="1.4" stroke-linecap="round"/></svg>
<svg class="a" style="left:597px;top:76px" width="40" height="40" viewBox="0 0 40 40"><path d="M4.1 10.8 V6.3 Q4.1 4.3 6.2 4.3 H15 Q16.5 4.3 17.8 5.8 Q19.5 7.9 21.7 7.9 H33.8 Q35.9 7.9 35.9 10 V10.8Z" fill="#a3a3a3"/><path d="M4.1 12.2 H35.9 V32.2 Q35.9 34.3 33.8 34.3 H6.2 Q4.1 34.3 4.1 32.2Z" fill="#a3a3a3"/></svg>
<svg class="a" style="left:670px;top:74px" width="40" height="40" viewBox="0 0 40 40"><path d="M5.6 14.8 L17.6 3.6 L29.7 14.8" fill="none" stroke="#a3a3a3" stroke-width="1.75"/><path d="M9.2 25.6 V15.8 L18 8.4 L26.7 15.8 V25.6" fill="none" stroke="#a3a3a3" stroke-width="1.3"/><line x1="9.2" y1="17.2" x2="26.7" y2="17.2" stroke="#a3a3a3" stroke-width="1.3"/><line x1="14.3" y1="12.3" x2="21.6" y2="12.3" stroke="#cfcfcf" stroke-width="1"/><line x1="14.8" y1="12" x2="14.8" y2="25.6" stroke="#c8c8c8" stroke-width="1.1"/><line x1="21.1" y1="12" x2="21.1" y2="25.6" stroke="#c8c8c8" stroke-width="1.1"/><line x1="7" y1="27.5" x2="28.9" y2="27.5" stroke="#a3a3a3" stroke-width="1.6"/></svg>
<svg class="a" style="left:682.8px;top:128px" width="11" height="5" viewBox="0 0 11 5"><path d="M0 0 H10.2 L5.1 4.8Z" fill="#a3a3a3"/></svg>
<svg class="a" style="left:751px;top:76px" width="40" height="40" viewBox="0 0 40 40"><path d="M9.6 10.2 H16.7 V22.4 L15 23.8 V32.8 Q15 34.9 12.9 34.9 H6.2 Q4.2 34.9 4.2 32.8 V27.5 Q4.4 22 5.6 17 L7.6 11.7 Q8.1 10.2 9.6 10.2Z" fill="#4E2CA8"/><path d="M30.5 10.2 H23.4 V22.4 L25.1 23.8 V32.8 Q25.1 34.9 27.2 34.9 H33.9 Q35.9 34.9 35.9 32.8 V27.5 Q35.7 22 34.5 17 L32.5 11.7 Q32 10.2 30.5 10.2Z" fill="#4E2CA8"/><rect x="11.1" y="4" width="5.9" height="4.7" fill="#E6B062"/><rect x="23" y="4" width="5.9" height="4.7" fill="#E6B062"/><rect x="18.5" y="12" width="2.8" height="9" rx="0.6" fill="#E6B062"/></svg>
<svg class="a" style="left:822px;top:76px" width="40" height="40" viewBox="0 0 40 40"><text x="4.2" y="16.9" font-family="Liberation Sans" font-weight="700" font-size="16.2" fill="#a3a3a3" stroke="#a3a3a3" stroke-width="0.5" textLength="16.3" lengthAdjust="spacingAndGlyphs">AB</text><text x="19" y="33.8" font-family="Liberation Sans" font-weight="700" font-size="16.2" fill="#a3a3a3" stroke="#a3a3a3" stroke-width="0.5" textLength="16.8" lengthAdjust="spacingAndGlyphs">AC</text><path d="M5.9 19.2 V24.5 Q5.9 28.2 9.5 28.2 H16.5" fill="none" stroke="#a3a3a3" stroke-width="2.1" stroke-linecap="round"/><path d="M13.5 23.6 L17.8 27.9 L13.5 32.3" fill="none" stroke="#a3a3a3" stroke-width="2.1" stroke-linecap="round" stroke-linejoin="round"/></svg>
<svg class="a" style="left:912px;top:76px" width="40" height="40" viewBox="0 0 40 40"><rect x="4.6" y="4.4" width="8.8" height="11.3" rx="1" fill="#fff" stroke="#a3a3a3" stroke-width="1"/><line x1="6.4" y1="6.6" x2="11.8" y2="6.6" stroke="#a3a3a3" stroke-width="0.9"/><line x1="6.4" y1="9.3" x2="11.6" y2="9.3" stroke="#cfcfcf" stroke-width="0.9"/><line x1="6.4" y1="13.3" x2="11.6" y2="13.3" stroke="#a3a3a3" stroke-width="1"/><path d="M16.4 18.6 V12.3 Q16.4 10.6 18.1 10.6 H33.9 Q35.6 10.6 35.6 12.3 V33.7 Q35.6 35.4 33.9 35.4 H18.1 Q16.4 35.4 16.4 33.7 V30" fill="none" stroke="#a3a3a3" stroke-width="1"/><line x1="18.6" y1="14.5" x2="33.6" y2="14.5" stroke="#a3a3a3" stroke-width="1.3" stroke-linecap="round"/><path d="M18.6 20.3 V18.3 Q18.6 17.5 19.4 17.5 H32.8 Q33.6 17.5 33.6 18.3 V25.5 Q33.6 26.3 32.8 26.3 H20.2" fill="none" stroke="#a3a3a3" stroke-width="0.9"/><line x1="18.6" y1="20.3" x2="33.6" y2="20.3" stroke="#a3a3a3" stroke-width="0.9"/><line x1="21" y1="23.3" x2="33.6" y2="23.3" stroke="#a3a3a3" stroke-width="0.9"/><line x1="28.5" y1="17.5" x2="28.5" y2="26.3" stroke="#a3a3a3" stroke-width="0.9"/><line x1="18.6" y1="31.5" x2="33.6" y2="31.5" stroke="#a3a3a3" stroke-width="1.3" stroke-linecap="round"/><path d="M6.7 18.5 V21.8 Q6.7 25 10 25 H18.5" fill="none" stroke="#a3a3a3" stroke-width="2.2" stroke-linecap="round"/><path d="M14 19.8 L18.7 24.7 L14 29.2" fill="none" stroke="#a3a3a3" stroke-width="2.2" stroke-linecap="round" stroke-linejoin="round"/></svg>
<svg class="a" style="left:1008px;top:76px" width="40" height="40" viewBox="0 0 40 40"><path d="M4.6 10.5 V31 Q4.6 32.6 6.2 32.6 H21.8 Q23.4 32.6 23.4 31 V10.5" fill="#fff" stroke="#6e6e6e" stroke-width="1"/><path d="M4.1 10.8 V8.6 Q4.1 7.1 5.6 7.1 H22.4 Q23.9 7.1 23.9 8.6 V10.8Z" fill="#4E2CA8"/><rect x="6.3" y="13.3" width="6.7" height="7.5" rx="1" fill="#6a6a70"/><rect x="15.2" y="13.3" width="6.6" height="7.5" rx="1" fill="#6a6a70"/><rect x="6.3" y="23.2" width="6.7" height="7.4" rx="1" fill="#6a6a70"/><rect x="15.2" y="23.2" width="6.6" height="7.4" rx="1" fill="#4E2CA8"/><path d="M28.2 7.2 H32.2 L34.7 9.7 V16.2 a1 1 0 0 1 -1 1 H28.2 a1 1 0 0 1 -1 -1 V8.2 a1 1 0 0 1 1 -1Z" fill="#fff" stroke="#6e6e6e" stroke-width="0.9"/><path d="M32.2 7.2 V8.7 a1 1 0 0 0 1 1 H34.7" fill="none" stroke="#6e6e6e" stroke-width="0.9"/><line x1="28.9" y1="11.5" x2="32.8" y2="11.5" stroke="#4E2CA8" stroke-width="0.9"/><line x1="28.9" y1="13.5" x2="32.8" y2="13.5" stroke="#4E2CA8" stroke-width="0.9"/><line x1="28.9" y1="15.3" x2="32.8" y2="15.3" stroke="#4E2CA8" stroke-width="0.9"/><path d="M25.5 29.6 Q31 30.5 31 25.5 V20" fill="none" stroke="#4E2CA8" stroke-width="2.1" stroke-linecap="round"/><path d="M26.8 23.5 L31 19.5 L35.3 23.5" fill="none" stroke="#4E2CA8" stroke-width="2.1" stroke-linecap="round" stroke-linejoin="round"/></svg>
<svg class="a" style="left:1063.3px;top:116.5px" width="10" height="5" viewBox="0 0 10 5"><path d="M0 0 H9.5 L4.75 4.7Z" fill="#444"/></svg>
<svg class="a" style="left:1122px;top:76px" width="45" height="40" viewBox="0 0 45 40"><path d="M2.6 8.8 V33.3 Q2.6 35.4 4.7 35.4 H24.2 Q26.3 35.4 26.3 33.3 V8.8" fill="#fff" stroke="#6e6e6e" stroke-width="0.9"/><path d="M2.2 8.9 V6 Q2.2 4 4.2 4 H24.6 Q26.6 4 26.6 6 V8.9Z" fill="#4E2CA8"/><path d="M5.5 15.4 H11.0 L13.5 17.9 V26.4 a1 1 0 0 1 -1 1 H5.5 a1 1 0 0 1 -1 -1 V16.4 a1 1 0 0 1 1 -1Z" fill="#fff" stroke="#6e6e6e" stroke-width="0.9"/><path d="M11.0 15.4 V16.9 a1 1 0 0 0 1 1 H13.5" fill="none" stroke="#6e6e6e" stroke-width="0.9"/><path d="M16.4 15.4 H21.9 L24.4 17.9 V26.4 a1 1 0 0 1 -1 1 H16.4 a1 1 0 0 1 -1 -1 V16.4 a1 1 0 0 1 1 -1Z" fill="#fff" stroke="#6e6e6e" stroke-width="0.9"/><path d="M21.9 15.4 V16.9 a1 1 0 0 0 1 1 H24.4" fill="none" stroke="#6e6e6e" stroke-width="0.9"/><line x1="6.5" y1="20.4" x2="11.5" y2="20.4" stroke="#4E2CA8" stroke-width="1.25" stroke-linecap="round"/><line x1="6.5" y1="22.5" x2="11.5" y2="22.5" stroke="#4E2CA8" stroke-width="1.25" stroke-linecap="round"/><line x1="6.5" y1="24.5" x2="11.5" y2="24.5" stroke="#4E2CA8" stroke-width="1.25" stroke-linecap="round"/><line x1="17.4" y1="20.4" x2="22.4" y2="20.4" stroke="#4E2CA8" stroke-width="1.25" stroke-linecap="round"/><line x1="17.4" y1="22.5" x2="22.4" y2="22.5" stroke="#4E2CA8" stroke-width="1.25" stroke-linecap="round"/><line x1="17.4" y1="24.5" x2="22.4" y2="24.5" stroke="#4E2CA8" stroke-width="1.25" stroke-linecap="round"/><path d="M28.1 5 Q28.1 4 29.1 4 H32 L33 5 H40.2 Q41 5 41 6 V15.2 Q41 16 40.2 16 H28.9 Q28.1 16 28.1 15.2Z" fill="#E6B062"/><path d="M28.1 5 Q28.1 4 29.1 4 H32 L33 5 H40.2 Q41 5 41 6 V7.2 H28.1Z" fill="#A87B2A"/><line x1="28.3" y1="10.8" x2="41" y2="10.8" stroke="#8a8a9a" stroke-width="0.9" stroke-dasharray="1,1"/><path d="M29 32 Q35 32.5 35 26.5 V20" fill="none" stroke="#4E2CA8" stroke-width="2.4" stroke-linecap="round"/><path d="M30.6 24.2 L35 19.2 L39.8 24" fill="none" stroke="#4E2CA8" stroke-width="2.3" stroke-linecap="round" stroke-linejoin="round"/></svg>
<svg class="a" style="left:1192.3px;top:116.5px" width="10" height="5" viewBox="0 0 10 5"><path d="M0 0 H9.5 L4.75 4.7Z" fill="#444"/></svg>
<svg class="a" style="left:1236px;top:76px" width="40" height="40" viewBox="0 0 40 40"><path d="M27 5.3 L34.7 4 L32.5 11.9 Z" fill="#4E2CA8" stroke="#4E2CA8" stroke-width="1" stroke-linejoin="round"/><path d="M18.3 12.6 Q21.5 7.5 25.4 6 Q27.5 10.5 32.7 13.3 Q30.5 17.5 26.4 20.7 Q21 19 18.3 12.6Z" fill="#E6B062"/><circle cx="25.3" cy="13.5" r="2.7" fill="#fff"/><path d="M4.4 22.3 L8 18.3 L13.2 18.4 L17 14.3 Q18.5 18.5 24.5 21.3 L21 25 L20.6 30.5 L16.7 34.5 L15.4 30 L13.3 29 L10.5 28.3 L9 23.3Z" fill="#4E2CA8"/><path d="M7.2 26.5 Q5.3 31 5.6 33.5 Q8.5 33.8 12.5 31.2" fill="none" stroke="#4E2CA8" stroke-width="1.1"/><path d="M3.4 32.3 Q3 35 4 35.5 Q5.5 35.8 6.5 35.3" fill="none" stroke="#4E2CA8" stroke-width="1"/></svg>
<svg class="a" style="left:1306px;top:76px" width="40" height="40" viewBox="0 0 40 40"><path d="M8.3 17.6 Q8.5 9.3 14 9.3 Q17 9.3 20 11.8 Q22.5 14 24.3 14 Q30.5 13.8 30.6 7" fill="none" stroke="#a3a3a3" stroke-width="0.8"/><rect x="4.4" y="17.9" width="30.3" height="15.2" rx="2" fill="#fff" stroke="#a3a3a3" stroke-width="0.9"/><rect x="6.8" y="19.7" width="1.6" height="1.6" fill="#a3a3a3"/><rect x="13.2" y="19.7" width="1.6" height="1.6" fill="#a3a3a3"/><rect x="16.4" y="19.7" width="1.6" height="1.6" fill="#a3a3a3"/><rect x="19.599999999999998" y="19.7" width="1.6" height="1.6" fill="#a3a3a3"/><rect x="23.0" y="19.7" width="1.6" height="1.6" fill="#a3a3a3"/><rect x="30.599999999999998" y="19.7" width="1.6" height="1.6" fill="#a3a3a3"/><rect x="6.8" y="22.8" width="1.6" height="1.6" fill="#a3a3a3"/><rect x="9.899999999999999" y="22.8" width="1.6" height="1.6" fill="#a3a3a3"/><rect x="13.2" y="22.8" width="1.6" height="1.6" fill="#a3a3a3"/><rect x="16.4" y="22.8" width="1.6" height="1.6" fill="#a3a3a3"/><rect x="30.599999999999998" y="22.8" width="1.6" height="1.6" fill="#a3a3a3"/><rect x="13.2" y="25.7" width="1.6" height="1.6" fill="#a3a3a3"/><rect x="16.4" y="25.7" width="1.6" height="1.6" fill="#a3a3a3"/><rect x="19.599999999999998" y="25.7" width="1.6" height="1.6" fill="#a3a3a3"/><rect x="30.599999999999998" y="25.7" width="1.6" height="1.6" fill="#a3a3a3"/><rect x="6.8" y="28.8" width="1.6" height="1.6" fill="#a3a3a3"/><rect x="9.899999999999999" y="28.8" width="1.6" height="1.6" fill="#a3a3a3"/><rect x="27.5" y="28.8" width="1.6" height="1.6" fill="#a3a3a3"/><rect x="30.599999999999998" y="28.8" width="1.6" height="1.6" fill="#a3a3a3"/><rect x="6.7" y="25.8" width="5" height="1.5" fill="#a3a3a3"/><rect x="13.2" y="28.8" width="11.7" height="1.6" fill="#a3a3a3"/><path d="M19.8 22.8 H24.7 V27.2 H23.2 V24.3 H19.8Z" fill="#a3a3a3"/></svg>
<svg class="a" style="left:1390px;top:76px" width="40" height="40" viewBox="0 0 40 40"><path d="M19.5 32.3 H6.5 Q4.3 32.3 4.3 30 V6.6 Q4.3 4.4 6.5 4.4 H27.2 Q29.4 4.4 29.4 6.6 V21.3" fill="none" stroke="#a3a3a3" stroke-width="1.2"/><rect x="8.2" y="8.4" width="17.3" height="5.4" rx="0.5" fill="#a3a3a3"/><rect x="8.2" y="17" width="3.6" height="3.6" fill="#a3a3a3"/><rect x="15.1" y="17" width="3.6" height="3.6" fill="#a3a3a3"/><rect x="21.9" y="17" width="3.6" height="3.6" fill="#a3a3a3"/><rect x="8.2" y="23.3" width="3.6" height="3.6" fill="#a3a3a3"/><rect x="15.1" y="23.3" width="3.6" height="3.6" fill="#a3a3a3"/><circle cx="27" cy="29" r="6.1" fill="#fff" stroke="#a3a3a3" stroke-width="1.2"/><circle cx="27" cy="29" r="3.3" fill="#a3a3a3"/><path d="M27.3 28.6 L30.8 25.6 L31.6 29.2Z" fill="#fff"/><path d="M29.3 25.6 L32.3 24.6 L32.2 28.3Z" fill="#a3a3a3"/></svg>
<svg class="a" style="left:0px;top:160px" width="30" height="30" viewBox="1.65 1.57 36.7 36.7"><rect x="4.1" y="5" width="9.1" height="25.8" rx="1.6" fill="#4E2CA8"/><rect x="5.3" y="8.5" width="6.7" height="11.5" rx="0.6" fill="#fff"/><line x1="6.1" y1="10.4" x2="11.2" y2="10.4" stroke="#444" stroke-width="1.3"/><line x1="6.1" y1="14" x2="11.2" y2="14" stroke="#444" stroke-width="1.3"/><line x1="6.1" y1="17.5" x2="11.2" y2="17.5" stroke="#444" stroke-width="1.3"/><circle cx="8.7" cy="25.3" r="2.8" fill="#fff"/><rect x="15.2" y="5" width="9.1" height="25.8" rx="1.6" fill="#E6BA1E"/><rect x="16.4" y="8.5" width="6.7" height="11.5" rx="0.6" fill="#fff"/><line x1="17.2" y1="10.4" x2="22.299999999999997" y2="10.4" stroke="#444" stroke-width="1.3"/><line x1="17.2" y1="14" x2="22.299999999999997" y2="14" stroke="#444" stroke-width="1.3"/><line x1="17.2" y1="17.5" x2="22.299999999999997" y2="17.5" stroke="#444" stroke-width="1.3"/><circle cx="19.799999999999997" cy="25.3" r="2.8" fill="#fff"/><rect x="26.8" y="5" width="9.1" height="25.8" rx="1.6" fill="#4E2CA8"/><rect x="28.0" y="8.5" width="6.7" height="11.5" rx="0.6" fill="#fff"/><line x1="28.8" y1="10.4" x2="33.9" y2="10.4" stroke="#444" stroke-width="1.3"/><line x1="28.8" y1="14" x2="33.9" y2="14" stroke="#444" stroke-width="1.3"/><line x1="28.8" y1="17.5" x2="33.9" y2="17.5" stroke="#444" stroke-width="1.3"/><circle cx="31.4" cy="25.3" r="2.8" fill="#fff"/><rect x="4.1" y="31.9" width="31.7" height="3.9" rx="1" fill="#E6B062"/></svg>
<svg class="a" style="left:0px;top:191px" width="30" height="30" viewBox="1.65 0.52 36.8 36.8"><path d="M13.6 8.3 V6 Q13.6 4.2 15.4 4.2 H24.6 Q26.4 4.2 26.4 6 V8.3" fill="none" stroke="#6e6e6e" stroke-width="1.1"/><rect x="4.1" y="9.1" width="31.8" height="25.6" rx="2.2" fill="#4E2CA8"/><rect x="4.1" y="21.2" width="31.8" height="1.9" fill="#fff"/><rect x="16.2" y="17" width="7.5" height="10.3" rx="1" fill="#fff"/><rect x="17.8" y="18.4" width="4.2" height="7.5" fill="#E6B062"/></svg>
<div class="a" style="left:1px;top:224px;width:30px;height:30px;background:#FFEAB5;border-radius:4px;"></div>
<svg class="a" style="left:0px;top:224px" width="30" height="30" viewBox="1.63 1.36 37 37"><path d="M4.6 10.5 V31.5 Q4.6 34.3 7.4 34.3 H29 L30 31.2 H33 Q35.3 31.2 35.3 29 V10.5" fill="#fff" stroke="#6e6e6e" stroke-width="1.1"/><path d="M4.1 10.8 V8.4 Q4.1 6.3 6.2 6.3 H33.7 Q35.8 6.3 35.8 8.4 V10.8Z" fill="#4E2CA8"/><path d="M15.4 34.3 V32.3 Q15.4 31.3 16.4 31.3 H30" fill="none" stroke="#6e6e6e" stroke-width="1"/><path d="M22.4 34.3 L23.2 31.3" stroke="#6e6e6e" stroke-width="1"/><line x1="7.3" y1="13.1" x2="32.8" y2="13.1" stroke="#5a5a5a" stroke-width="1.4" stroke-linecap="round"/><line x1="7.5" y1="17.1" x2="14.6" y2="17.1" stroke="#b0b0b0" stroke-width="1.3" stroke-linecap="round"/><line x1="16.5" y1="17.1" x2="23.6" y2="17.1" stroke="#b0b0b0" stroke-width="1.3" stroke-linecap="round"/><line x1="25.3" y1="17.1" x2="32.7" y2="17.1" stroke="#4E2CA8" stroke-width="1.4" stroke-linecap="round"/><line x1="7.5" y1="20.8" x2="14.6" y2="20.8" stroke="#b0b0b0" stroke-width="1.3" stroke-linecap="round"/><line x1="16.5" y1="20.8" x2="23.6" y2="20.8" stroke="#b0b0b0" stroke-width="1.3" stroke-linecap="round"/><line x1="25.3" y1="20.8" x2="32.7" y2="20.8" stroke="#4E2CA8" stroke-width="1.4" stroke-linecap="round"/><line x1="7.5" y1="24.3" x2="14.6" y2="24.3" stroke="#b0b0b0" stroke-width="1.3" stroke-linecap="round"/><line x1="16.5" y1="24.3" x2="23.6" y2="24.3" stroke="#b0b0b0" stroke-width="1.3" stroke-linecap="round"/><line x1="25.3" y1="24.3" x2="32.7" y2="24.3" stroke="#4E2CA8" stroke-width="1.4" stroke-linecap="round"/></svg>
<svg class="a" style="left:40px;top:440px" width="20" height="16" viewBox="0 0 20 16"><path d="M7 5 H10.8 V7 H12.7 V9.5 H14.8 V12 H3 V9.5 H5.2 V7 H7Z" fill="#DD7C62"/><path d="M8.6 5.8 L9.4 8.8 M6.2 8 H7.6 M10.4 8 H11.8 M4.2 10.6 H5.8 M7.4 10.6 H9 M10.6 10.6 H12.2 M8.4 9.3 L9 11.6" stroke="#EBB09E" stroke-width="0.7"/><rect x="3.9" y="12" width="10.9" height="0.9" fill="#7E6FB0"/></svg>
<svg class="a" style="left:40px;top:494px" width="20" height="16" viewBox="0 0 20 16"><path d="M7 5 H10.8 V7 H12.7 V9.5 H14.8 V12 H3 V9.5 H5.2 V7 H7Z" fill="#DD7C62"/><path d="M8.6 5.8 L9.4 8.8 M6.2 8 H7.6 M10.4 8 H11.8 M4.2 10.6 H5.8 M7.4 10.6 H9 M10.6 10.6 H12.2 M8.4 9.3 L9 11.6" stroke="#EBB09E" stroke-width="0.7"/><rect x="3.9" y="12" width="10.9" height="0.9" fill="#7E6FB0"/></svg>
<svg class="a" style="left:40px;top:548px" width="20" height="16" viewBox="0 0 20 16"><path d="M7 5 H10.8 V7 H12.7 V9.5 H14.8 V12 H3 V9.5 H5.2 V7 H7Z" fill="#DD7C62"/><path d="M8.6 5.8 L9.4 8.8 M6.2 8 H7.6 M10.4 8 H11.8 M4.2 10.6 H5.8 M7.4 10.6 H9 M10.6 10.6 H12.2 M8.4 9.3 L9 11.6" stroke="#EBB09E" stroke-width="0.7"/><rect x="3.9" y="12" width="10.9" height="0.9" fill="#7E6FB0"/></svg>
<svg class="a" style="left:52px;top:1048px" width="28" height="24" viewBox="0 0 28 24"><rect x="4.4" y="13.5" width="5" height="4" transform="rotate(45 6.9 15.5)" fill="#E6B062"/><rect x="9.3" y="8" width="4.3" height="4.5" rx="0.4" fill="#E6B062"/><circle cx="12.4" cy="9.4" r="0.7" fill="#fff"/><circle cx="12.3" cy="9.8" r="4.6" fill="none" stroke="#4E2CA8" stroke-width="1.85"/><line x1="15.8" y1="13.3" x2="20.8" y2="18.5" stroke="#4E2CA8" stroke-width="2" stroke-linecap="round"/></svg>
<svg class="a" style="left:0;top:0" width="1753" height="1077"><path d="M141.1 466.1 L162.9 478.4 L158.2 482.7 L159.9 484.7 L158 486.9 L155.6 485.1 L151.4 489Z" fill="#FF0000"/></svg>
<svg class="a" style="left:0;top:0" width="1753" height="1077"><path d="M139.1 520.2 L157.3 536.6 L152.7 539.7 L153.8 543.6 L151.6 544.9 L150.3 541.8 L143.9 544.4Z" fill="#FF0000"/></svg>
<svg class="a" style="left:0;top:0" width="1753" height="1077"><path d="M141 573.4 L157.9 591.6 L153 594.3 L154 598.6 L151.4 599.7 L149.9 595.5 L143 597.9Z" fill="#FF0000"/></svg>
<div class="a" style="left:0;top:0;width:1753px;height:1077px;box-sizing:border-box;border:1px solid #777;"></div>
</body></html>
